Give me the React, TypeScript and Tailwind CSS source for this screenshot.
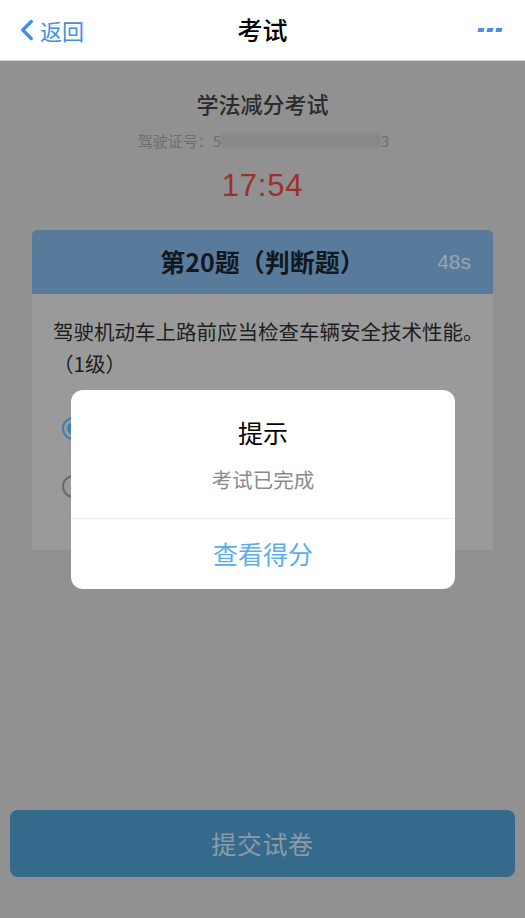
import { ChevronLeft } from 'lucide-react';

const font = { fontFamily: '"Noto Sans CJK SC", "Noto Sans", sans-serif' };

const Radio = ({ checked }: { checked?: boolean }) => (
  <div
    className={`w-[23px] h-[23px] rounded-full border-2 flex items-center justify-center ${
      checked ? 'border-[#3d7fae]' : 'border-[#6a6a6a]'
    }`}
  >
    {checked && <div className="w-[13px] h-[13px] rounded-full bg-[#3d7fae]" />}
  </div>
);

export default function App() {
  return (
    <div style={font} className="relative w-[525px] h-[918px] overflow-hidden bg-[#919191]">
      {/* nav bar */}
      <div className="h-[61px] bg-white border-b border-[#d6d6d6] flex items-center justify-between px-[14px]">
        <div className="flex items-center w-[90px] text-[#3f8fe4]">
          <ChevronLeft size={34} strokeWidth={2.4} className="-ml-[4px]" />
          <span className="text-[22px] -ml-[4px]">返回</span>
        </div>
        <div className="text-[25px] font-medium text-black">考试</div>
        <div className="w-[90px] flex justify-end gap-[3px] pr-[9px]">
          <span className="w-[6px] h-[4px] bg-[#4a8fe6] -skew-x-12" />
          <span className="w-[6px] h-[4px] bg-[#4a8fe6] -skew-x-12" />
          <span className="w-[6px] h-[4px] bg-[#4a8fe6] -skew-x-12" />
        </div>
      </div>

      {/* exam info */}
      <div className="flex flex-col items-center pt-[27px]">
        <div className="text-[22px] font-medium text-[#2b2b2b] leading-[30px]">学法减分考试</div>
        <div className="mt-[12px] flex items-center text-[15px] text-[#6e6e6e] leading-[22px] ml-[2px]">
          <span>驾驶证号：</span>
          <span>5</span>
          <span className="w-[160px] h-[14px] bg-[#888] blur-[1.5px]" />
          <span>3</span>
        </div>
        <div className="mt-[16px] text-[31px] font-medium text-[#9e2f2f] leading-[36px] tracking-wide" style={{ fontFamily: '"Liberation Sans", Arial, sans-serif' }}>
          17:54
        </div>
      </div>

      {/* question card */}
      <div className="mx-[32px] mt-[26px] rounded-t-[5px] overflow-hidden bg-[#9a9a9a]">
        <div className="relative h-[64px] bg-[#587a9b] flex items-center justify-center">
          <span className="text-[25px] font-semibold text-[#121820]">第20题（判断题）</span>
          <span className="absolute right-[22px] top-[16px] text-[21px] text-[#97a6b4]" style={{ fontFamily: '"Liberation Sans", Arial, sans-serif' }}>
            48s
          </span>
        </div>
        <div className="px-[21px] pt-[21px] pb-[52px]">
          <p className="text-[20.5px] leading-[32px] text-[#1e1e1e] whitespace-nowrap">
            驾驶机动车上路前应当检查车辆安全技术性能。
            <br />
            （1级）
          </p>
          <div className="mt-[38px] flex flex-col gap-[35px] pl-[9px]">
            <Radio checked />
            <Radio />
          </div>
        </div>
      </div>

      {/* submit button */}
      <div className="absolute left-[10px] right-[10px] top-[810px] h-[67px] rounded-[8px] bg-[#356a8c] flex items-center justify-center">
        <span className="text-[25px] text-[#8c9ba6] tracking-wide">提交试卷</span>
      </div>

      {/* dialog */}
      <div className="absolute left-[71px] top-[390px] w-[384px] bg-white rounded-[12px] overflow-hidden">
        <div className="flex flex-col items-center pt-[25px] pb-[25px]">
          <div className="text-[25px] text-black leading-[34px]">提示</div>
          <div className="mt-[16px] text-[20.5px] text-[#8a8a8a] leading-[28px]">考试已完成</div>
        </div>
        <div className="h-[1px] bg-[#ececec]" />
        <div className="h-[70px] flex items-center justify-center text-[25px] text-[#5aaeea]">查看得分</div>
      </div>
    </div>
  );
}
